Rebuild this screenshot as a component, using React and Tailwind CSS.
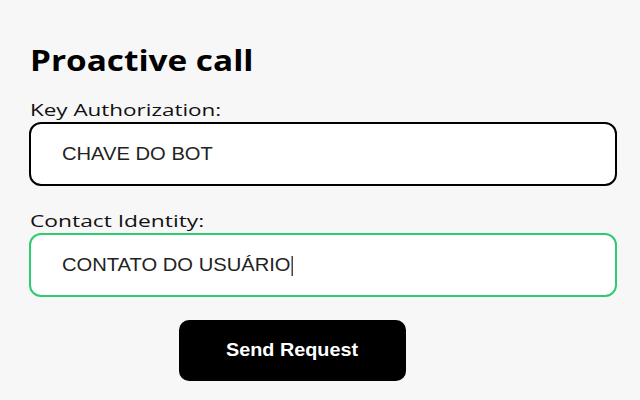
const App = () => {
  return (
    <div className="w-[640px] h-[400px] bg-[#f7f7f7] overflow-hidden" style={{ fontFamily: '"Open Sans", sans-serif' }}>
      <div className="pl-[29px] pt-[40px] w-[617px]">
        <h1 className="text-[28px] font-bold text-black leading-[40px] pl-[1px]">
          <span className="inline-block origin-left scale-x-[1.19]">Proactive call</span>
        </h1>

        <div className="mt-[18px]">
          <label className="block text-[17px] text-[#111] leading-[24px] pl-[1px]">
            <span className="inline-block origin-left scale-x-[1.32]">Key Authorization:</span>
          </label>
          <div className="h-[64px] bg-white border-2 border-black rounded-[12px] flex items-center pl-[31px]" style={{ fontFamily: '"Liberation Sans", Arial, sans-serif' }}>
            <span className="inline-block origin-left scale-x-[1.12] text-[18px] text-[#222]">CHAVE DO BOT</span>
          </div>
        </div>

        <div className="mt-[23px]">
          <label className="block text-[17px] text-[#111] leading-[24px] pl-[1px]">
            <span className="inline-block origin-left scale-x-[1.34]">Contact Identity:</span>
          </label>
          <div className="h-[64px] bg-white border-2 border-[#2ecc71] rounded-[12px] flex items-center pl-[31px]" style={{ fontFamily: '"Liberation Sans", Arial, sans-serif' }}>
            <span className="inline-block origin-left scale-x-[1.12] text-[18px] text-[#222] whitespace-nowrap">
              CONTATO DO USUÁRIO<span className="inline-block align-middle ml-[1px] w-[1px] h-[20px] bg-black"></span>
            </span>
          </div>
        </div>

        <div className="pl-[150px] mt-[23px]">
          <button className="w-[227px] h-[61px] bg-black text-white rounded-[10px] text-[18px] font-bold" style={{ fontFamily: '"Liberation Sans", Arial, sans-serif' }}>
            <span className="inline-block scale-x-[1.1]">Send Request</span>
          </button>
        </div>
      </div>
    </div>
  );
};

export default App;
